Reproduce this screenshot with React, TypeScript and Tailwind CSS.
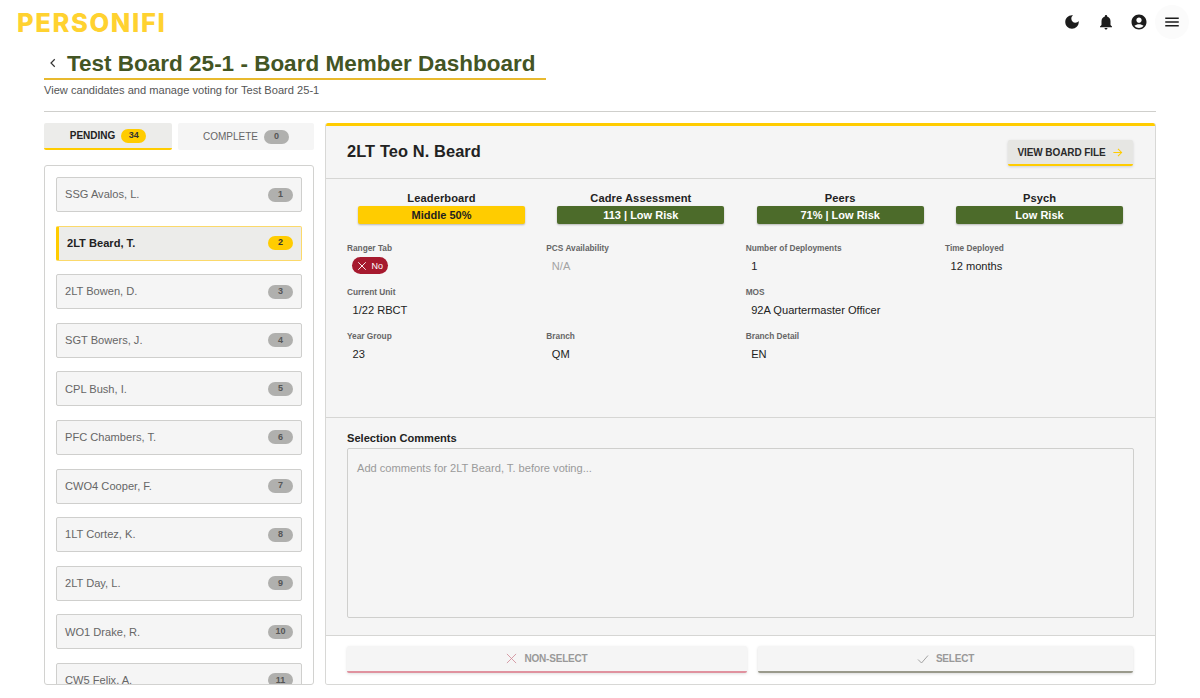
import React from "react";

const people = ["SSG Avalos, L.", "2LT Beard, T.", "2LT Bowen, D.", "SGT Bowers, J.", "CPL Bush, I.", "PFC Chambers, T.", "CWO4 Cooper, F.", "1LT Cortez, K.", "2LT Day, L.", "WO1 Drake, R.", "CW5 Felix, A."];

const metrics = [
  { title: "Leaderboard", value: "Middle 50%", cls: "bg-[#ffcc00] text-[#1f1f1f]" },
  { title: "Cadre Assessment", value: "113 | Low Risk", cls: "bg-[#4c6b2a] text-white" },
  { title: "Peers", value: "71% | Low Risk", cls: "bg-[#4c6b2a] text-white" },
  { title: "Psych", value: "Low Risk", cls: "bg-[#4c6b2a] text-white" },
];

function Mi({ d, cls = "w-[18px] h-[18px]" }: { d: string; cls?: string }) {
  return (
    <svg viewBox="0 0 24 24" className={cls} fill="currentColor"><path d={d} /></svg>
  );
}

function Field({ label, children }: { label: string; children: React.ReactNode }) {
  return (
    <div className="h-[44px] pt-[2px]">
      <div className="text-[8.3px] leading-[12px] font-bold text-[#666] h-[12px]">{label}</div>
      <div className="pl-[5.5px] text-[11.1px] leading-[18px] text-[#222] mt-[3px] h-[18px]">{children}</div>
    </div>
  );
}

export default function App() {
  return (
    <div className="h-[698px] w-[1200px] overflow-hidden bg-white font-['Liberation_Sans',Arial,sans-serif] flex flex-col">
      <header className="h-[44px] flex items-center justify-between pl-[17px] pr-[11px] shrink-0">
        <div className="font-['Inter',sans-serif] font-extrabold text-[25.5px] leading-none text-[#ffd230] tracking-[1.65px] mt-[1px]">PERSONIFI</div>
        <div className="flex items-center text-[#1c1c1c]">
          <button className="w-[34px] h-[34px] flex items-center justify-center">
            <Mi d="M12 3c-4.97 0-9 4.03-9 9s4.03 9 9 9 9-4.03 9-9c0-.46-.04-.92-.1-1.36-.98 1.37-2.58 2.26-4.4 2.26-2.98 0-5.4-2.42-5.4-5.4 0-1.81.89-3.42 2.26-4.4-.44-.06-.9-.1-1.36-.1z" />
          </button>
          <button className="w-[33px] h-[34px] flex items-center justify-center">
            <Mi d="M12 22c1.1 0 2-.9 2-2h-4c0 1.1.89 2 2 2zm6-6v-5c0-3.07-1.64-5.64-4.5-6.32V4c0-.83-.67-1.5-1.5-1.5s-1.5.67-1.5 1.5v.68C7.63 5.36 6 7.92 6 11v5l-2 2v1h16v-1l-2-2z" />
          </button>
          <button className="w-[33px] h-[34px] flex items-center justify-center">
            <Mi d="M12 2C6.48 2 2 6.48 2 12s4.48 10 10 10 10-4.48 10-10S17.52 2 12 2zm0 4c1.93 0 3.5 1.57 3.5 3.5S13.93 13 12 13s-3.5-1.57-3.5-3.5S10.07 6 12 6zm0 14c-2.03 0-4.43-.82-6.14-2.88C7.55 15.8 9.68 15 12 15s4.45.8 6.14 2.12C16.43 19.18 14.03 20 12 20z" />
          </button>
          <button className="w-[34px] h-[34px] rounded-full bg-[#fbfbfb] flex items-center justify-center">
            <Mi d="M3 18h18v-2H3v2zm0-5h18v-2H3v2zm0-7v2h18V6H3z" />
          </button>
        </div>
      </header>

      <main className="px-[44px] flex-1 flex flex-col min-h-0">
        <div className="h-[36px] flex items-center w-[502px] border-b-2 border-[#e8b92e] pt-[6px] shrink-0">
          <button className="w-[17px] flex justify-center text-[#333] mt-[-3px] mr-[6px]">
            <svg viewBox="0 0 24 24" className="w-[12px] h-[12px]" fill="none" stroke="currentColor" strokeWidth="2.4"><path d="M15.5 4.5 8 12l7.5 7.5" /></svg>
          </button>
          <h1 className="text-[22.5px] leading-[30px] font-bold text-[#435524] whitespace-nowrap">Test Board 25-1 - Board Member Dashboard</h1>
        </div>
        <p className="text-[11.1px] leading-[16px] text-[#555] mt-[2px] shrink-0">View candidates and manage voting for Test Board 25-1</p>
        <div className="h-px bg-[#cfcfcc] mt-[13px] shrink-0" />

        <div className="flex gap-[11px] mt-[11px] h-[562px] shrink-0">
          <aside className="w-[270px] flex flex-col shrink-0">
            <div className="flex gap-[6px] h-[27px]">
              <div className="w-[128px] bg-[#ececea] border-b-2 border-[#ffcc00] rounded-[2px] flex items-center justify-center gap-[6px] text-[10px] font-bold text-[#222]">
                <span>PENDING</span>
                <span className="w-[25px] h-[14px] rounded-full bg-[#ffcc00] flex items-center justify-center text-[9px] font-bold text-[#333]">34</span>
              </div>
              <div className="flex-1 bg-[#f5f5f5] rounded-[2px] flex items-center justify-center gap-[6px] text-[10px] text-[#666]">
                <span>COMPLETE</span>
                <span className="w-[25px] h-[14px] rounded-full bg-[#b0b0ae] flex items-center justify-center text-[9px] font-bold text-[#555]">0</span>
              </div>
            </div>
            <div className="mt-[15px] h-[520px] border border-[#d2d2d0] rounded-[3px] overflow-hidden px-[11px] pt-[11px]">
              <div className="flex flex-col gap-[13.6px]">
                {people.map((p, i) => {
                  const active = i === 1;
                  return (
                    <div
                      key={p}
                      className={
                        active
                          ? "h-[35px] shrink-0 flex items-center justify-between rounded-[2px] bg-[#ececea] border border-[#fbd96b] border-l-[3px] border-l-[#ffcc00] pl-[8px] pr-[8px]"
                          : "h-[35px] shrink-0 flex items-center justify-between rounded-[2px] bg-[#f5f5f5] border border-[#cfcfcd] pl-[8px] pr-[8px]"
                      }
                    >
                      <span className={active ? "text-[11.1px] font-bold text-[#222]" : "text-[11.1px] text-[#666]"}>{p}</span>
                      <span className={active ? "w-[25px] h-[14px] rounded-full bg-[#ffcc00] flex items-center justify-center text-[9px] font-bold text-[#333]" : "w-[25px] h-[14px] rounded-full bg-[#b0b0ae] flex items-center justify-center text-[9px] font-bold text-[#555]"}>{i + 1}</span>
                    </div>
                  );
                })}
              </div>
            </div>
          </aside>

          <section className="flex-1 flex flex-col border border-[#d8d8d6] border-t-0 rounded-[3px] overflow-hidden min-w-0">
            <div className="h-[3px] bg-[#ffcc00] shrink-0 mx-[-1px]" />
            <div className="flex flex-col h-[291px] shrink-0 bg-[#f5f5f5] border-x border-[#fbd96b] mx-[-1px]">
              <div className="h-[53px] shrink-0 border-b border-[#d6d6d4] pl-[21px] pr-[22px] flex items-center justify-between">
                <h2 className="text-[16.4px] font-bold text-[#222] tracking-[0.1px] mt-[-2px]">2LT Teo N. Beard</h2>
                <button className="w-[125px] h-[26px] mt-[1px] pt-[1px] bg-[#e6e6e3] border-b-2 border-[#ffcc00] rounded-[2px] shadow-[0_1px_3px_rgba(0,0,0,0.15)] flex items-center justify-center gap-[7px] text-[10px] tracking-[-0.1px] font-bold text-[#2a2a2a]">
                  VIEW BOARD FILE
                  <svg viewBox="0 0 24 24" className="w-[11px] h-[11px]" fill="none" stroke="#ffcc00" strokeWidth="2.2"><path d="M3 12h18M13 4l8 8-8 8" /></svg>
                </button>
              </div>
              <div className="pl-[21px]">
                <div className="grid grid-cols-[repeat(4,199.33px)] mt-[12px]">
                  {metrics.map((m) => (
                    <div key={m.title} className="w-[189px] flex flex-col items-center">
                      <div className="text-[11.1px] leading-[14px] font-bold text-[#222] tracking-[0.1px]">{m.title}</div>
                      <div className={"w-[167px] h-[18px] rounded-[2px] mt-[1px] pt-[1px] flex items-center justify-center text-[11px] font-bold shadow-[0_1px_2px_rgba(0,0,0,0.25)] " + m.cls}>{m.value}</div>
                    </div>
                  ))}
                </div>
                <div className="grid grid-cols-[repeat(4,199.33px)] mt-[16px]">
                  <Field label="Ranger Tab">
                    <span className="inline-flex items-center gap-[5px] h-[17px] w-[36px] ml-[-1px] rounded-full bg-[#a6192e] text-white text-[9px] pl-[5px]">
                      <svg viewBox="0 0 24 24" className="w-[10px] h-[10px] shrink-0" fill="none" stroke="currentColor" strokeWidth="2.2"><path d="M3 3l18 18M21 3 3 21" /></svg>
                      No
                    </span>
                  </Field>
                  <Field label="PCS Availability"><span className="text-[#a3a3a3]">N/A</span></Field>
                  <Field label="Number of Deployments">1</Field>
                  <Field label="Time Deployed">12 months</Field>
                  <div className="col-span-2"><Field label="Current Unit">1/22 RBCT</Field></div>
                  <div className="col-span-2"><Field label="MOS">92A Quartermaster Officer</Field></div>
                  <Field label="Year Group">23</Field>
                  <Field label="Branch">QM</Field>
                  <Field label="Branch Detail">EN</Field>
                </div>
              </div>
            </div>
            <div className="h-[218px] shrink-0 bg-[#f5f5f5] border-t border-[#d6d6d4] px-[21px] pt-[13px] flex flex-col">
              <label className="text-[11.1px] leading-[14px] font-bold text-[#222]">Selection Comments</label>
              <textarea
                placeholder={"Add comments for 2LT Beard, T. before voting..."}
                className="mt-[3px] h-[170px] w-full resize-none rounded-[2px] border border-[#cfcfcd] bg-[#f5f5f5] px-[9px] py-[11px] text-[11.1px] leading-[16px] placeholder:text-[#9a9a9a]"
              />
            </div>
            <div className="flex-1 border-t border-[#d6d6d4] bg-white pl-[21px] pr-[22px] pt-[10px] flex gap-[11px]">
              <button className="w-[400px] h-[27px] shrink-0 bg-[#f5f5f5] border-b-2 border-[#e0929f] rounded-[2px] shadow-[0_1px_3px_rgba(0,0,0,0.12)] flex items-center justify-center gap-[7px] text-[10px] tracking-[-0.2px] font-bold text-[#999]">
                <svg viewBox="0 0 24 24" className="w-[11px] h-[11px]" fill="none" stroke="#d08a96" strokeWidth="1.8"><path d="M2 2l20 20M22 2 2 22" /></svg>
                NON-SELECT
              </button>
              <button className="flex-1 h-[27px] bg-[#f5f5f5] border-b-2 border-[#9a9a8c] rounded-[2px] shadow-[0_1px_3px_rgba(0,0,0,0.15)] flex items-center justify-center gap-[7px] text-[10px] tracking-[-0.2px] font-bold text-[#999]">
                <svg viewBox="0 0 24 24" className="w-[12px] h-[12px]" fill="none" stroke="#999" strokeWidth="1.8"><path d="M2 13l7 7L22 5" /></svg>
                SELECT
              </button>
            </div>
          </section>
        </div>
      </main>
    </div>
  );
}
